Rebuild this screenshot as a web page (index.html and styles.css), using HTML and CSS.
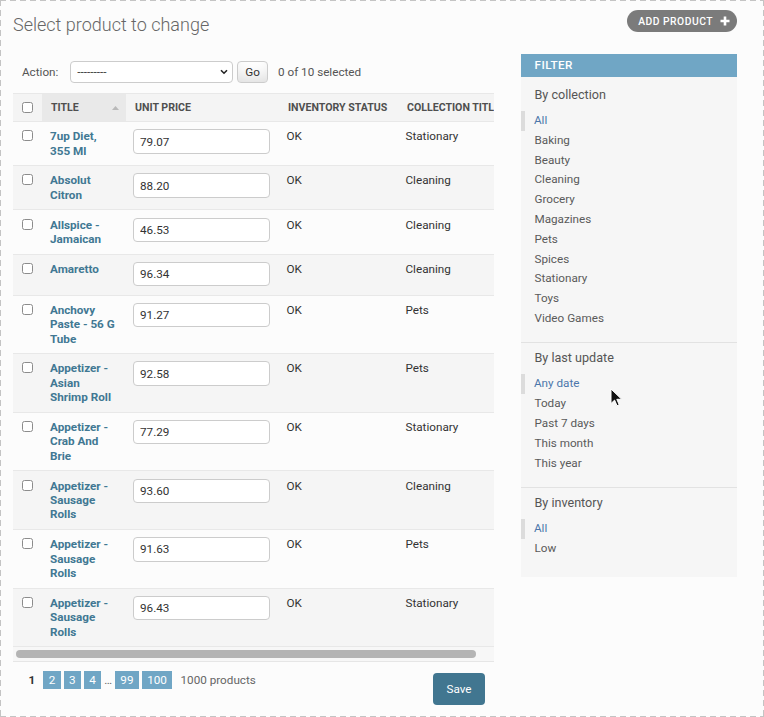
FILE: index.html
```html
<!DOCTYPE html>
<html lang="en">
<head>
<meta charset="utf-8">
<title>Select product to change</title>
<link rel="stylesheet" href="styles.css">
</head>
<body>
<div class="page">
  <header class="top">
    <h1>Select product to change</h1>
    <a class="addlink" href="#">Add product
      <svg class="plus" width="10" height="10" viewBox="0 0 10 10"><path d="M5 0.5v9M0.5 5h9" stroke="#fff" stroke-width="2.6"/></svg>
    </a>
  </header>
  <div class="main">
    <form class="changelist">
      <div class="actions">
        <label class="action-label">Action:</label>
        <span class="select-wrap">
          <select class="action-select"><option>---------</option></select>
          <svg class="chev" width="8" height="6" viewBox="0 0 8 6"><path d="M1 1.2l3 3 3-3" fill="none" stroke="#222" stroke-width="1.6"/></svg>
        </span>
        <button type="button" class="go">Go</button>
        <span class="counter">0 of 10 selected</span>
      </div>
      <div class="results">
        <table>
          <colgroup>
            <col class="c-check"><col class="c-title"><col class="c-price"><col class="c-status"><col class="c-coll">
          </colgroup>
          <thead>
            <tr>
              <th class="th-check"><input type="checkbox" class="cb"></th>
              <th class="sorted"><div class="sort-head"><span>Title</span><svg width="7" height="4" viewBox="0 0 7 4"><path d="M0 4L3.5 0 7 4z" fill="#b9b9b9"/></svg></div></th>
              <th>Unit price</th>
              <th>Inventory status</th>
              <th>Collection title</th>
            </tr>
          </thead>
          <tbody>
            <tr><td class="td-check"><input type="checkbox" class="cb"></td><th class="name"><a href="#">7up Diet, 355 Ml</a></th><td class="price"><input type="text" class="num" value="79.07"></td><td>OK</td><td>Stationary</td></tr>
            <tr><td class="td-check"><input type="checkbox" class="cb"></td><th class="name"><a href="#">Absolut Citron</a></th><td class="price"><input type="text" class="num" value="88.20"></td><td>OK</td><td>Cleaning</td></tr>
            <tr><td class="td-check"><input type="checkbox" class="cb"></td><th class="name"><a href="#">Allspice - Jamaican</a></th><td class="price"><input type="text" class="num" value="46.53"></td><td>OK</td><td>Cleaning</td></tr>
            <tr><td class="td-check"><input type="checkbox" class="cb"></td><th class="name"><a href="#">Amaretto</a></th><td class="price"><input type="text" class="num" value="96.34"></td><td>OK</td><td>Cleaning</td></tr>
            <tr><td class="td-check"><input type="checkbox" class="cb"></td><th class="name"><a href="#">Anchovy Paste - 56 G Tube</a></th><td class="price"><input type="text" class="num" value="91.27"></td><td>OK</td><td>Pets</td></tr>
            <tr><td class="td-check"><input type="checkbox" class="cb"></td><th class="name"><a href="#">Appetizer - Asian Shrimp Roll</a></th><td class="price"><input type="text" class="num" value="92.58"></td><td>OK</td><td>Pets</td></tr>
            <tr><td class="td-check"><input type="checkbox" class="cb"></td><th class="name"><a href="#">Appetizer - Crab And Brie</a></th><td class="price"><input type="text" class="num" value="77.29"></td><td>OK</td><td>Stationary</td></tr>
            <tr><td class="td-check"><input type="checkbox" class="cb"></td><th class="name"><a href="#">Appetizer - Sausage Rolls</a></th><td class="price"><input type="text" class="num" value="93.60"></td><td>OK</td><td>Cleaning</td></tr>
            <tr><td class="td-check"><input type="checkbox" class="cb"></td><th class="name"><a href="#">Appetizer - Sausage Rolls</a></th><td class="price"><input type="text" class="num" value="91.63"></td><td>OK</td><td>Pets</td></tr>
            <tr><td class="td-check"><input type="checkbox" class="cb"></td><th class="name"><a href="#">Appetizer - Sausage Rolls</a></th><td class="price"><input type="text" class="num" value="96.43"></td><td>OK</td><td>Stationary</td></tr>
          </tbody>
        </table>
      </div>
      <div class="hscroll"><div class="hthumb"></div></div>
      <div class="paginator">
        <div class="pages"><span class="this-page">1</span> <a href="#">2</a> <a href="#">3</a> <a href="#">4</a> … <a href="#">99</a> <a href="#" class="end">100</a> 1000 products</div>
        <button type="button" class="save">Save</button>
      </div>
    </form>
    <aside class="filter">
      <h2>Filter</h2>
      <section class="fsec">
        <h3>By collection</h3>
        <ul>
          <li class="selected"><a href="#">All</a></li>
          <li><a href="#">Baking</a></li>
          <li><a href="#">Beauty</a></li>
          <li><a href="#">Cleaning</a></li>
          <li><a href="#">Grocery</a></li>
          <li><a href="#">Magazines</a></li>
          <li><a href="#">Pets</a></li>
          <li><a href="#">Spices</a></li>
          <li><a href="#">Stationary</a></li>
          <li><a href="#">Toys</a></li>
          <li><a href="#">Video Games</a></li>
        </ul>
      </section>
      <section class="fsec">
        <h3>By last update</h3>
        <ul>
          <li class="selected"><a href="#">Any date</a></li>
          <li><a href="#">Today</a></li>
          <li><a href="#">Past 7 days</a></li>
          <li><a href="#">This month</a></li>
          <li><a href="#">This year</a></li>
        </ul>
      </section>
      <section class="fsec last">
        <h3>By inventory</h3>
        <ul>
          <li class="selected"><a href="#">All</a></li>
          <li><a href="#">Low</a></li>
        </ul>
      </section>
    </aside>
  </div>
  <svg class="cursor" width="12" height="19" viewBox="0 0 12 19"><path d="M1 1v14.5l3.6-3.4 2.4 5.6 2.2-1-2.4-5.4h4.9z" fill="#111" stroke="#fff" stroke-width="1"/></svg>
</div>
</body>
</html>
```
FILE: styles.css
```css
body {
  margin: 0;
  font-family: Roboto, "Liberation Sans", Arial, sans-serif;
  font-size: 11.7px;
  color: #333;
}

.page {
  position: relative;
  width: 764px;
  height: 717px;
  box-sizing: border-box;
  padding: 10px 27px 0 13px;
  overflow: hidden;
  background-color: #fcfcfc;
  background-image:
    repeating-linear-gradient(90deg, #c4c4c4 0 6px, transparent 6px 10px),
    repeating-linear-gradient(90deg, #c4c4c4 0 6px, transparent 6px 10px),
    repeating-linear-gradient(180deg, #c4c4c4 0 6px, transparent 6px 10px),
    repeating-linear-gradient(180deg, #c4c4c4 0 6px, transparent 6px 10px);
  background-size: 100% 1px, 100% 1px, 1px 100%, 1px 100%;
  background-position: 0 0, 0 100%, 0 0, 100% 0;
  background-repeat: no-repeat;
}

/* header */
.top {
  display: flex;
  justify-content: space-between;
  align-items: flex-start;
}
.top h1 {
  margin: 3.5px 0 0;
  font-size: 18px;
  font-weight: 300;
  line-height: 22px;
  color: #666;
}
.addlink {
  display: flex;
  align-items: center;
  gap: 7px;
  height: 22px;
  padding: 0 7px 0 11px;
  border-radius: 11px;
  background: #7b7b7b;
  color: #fff;
  font-size: 10.3px;
  font-weight: 500;
  letter-spacing: 0.5px;
  text-transform: uppercase;
  text-decoration: none;
}
.plus { display: block; }

/* layout */
.main {
  display: flex;
  align-items: flex-start;
  gap: 27px;
  margin-top: 18px;
}
.changelist {
  flex: 1;
  min-width: 0;
  margin: 0;
}

/* actions */
.actions {
  display: flex;
  align-items: center;
  height: 21.6px;
  padding: 8px 9px 10px;
  color: #555;
}
.action-label { line-height: 21.6px; }
.select-wrap {
  position: relative;
  display: block;
  margin-left: 12px;
}
.action-select {
  display: block;
  appearance: none;
  -webkit-appearance: none;
  width: 163px;
  height: 22px;
  box-sizing: border-box;
  border: 1px solid #ccc;
  border-radius: 4px;
  background: #fff;
  padding: 0 0 0 6px;
  font-family: inherit;
  font-size: 11.7px;
  color: #333;
}
.chev {
  position: absolute;
  right: 5px;
  top: 8px;
}
.go {
  margin-left: 4px;
  height: 22px;
  box-sizing: border-box;
  padding: 0 7px;
  border: 1px solid #ccc;
  border-radius: 4px;
  background: #fff;
  box-shadow: 0 -13px 18px -9px rgba(0, 0, 0, 0.15) inset;
  font-family: inherit;
  font-size: 11.7px;
  color: #333;
}
.counter { margin-left: 10px; }

/* results table */
.results {
  overflow: hidden;
}
table {
  border-collapse: collapse;
  table-layout: fixed;
  width: 497px;
}
.c-check { width: 29px; }
.c-title { width: 84px; }
.c-price { width: 153px; }
.c-status { width: 119px; }
.c-coll { width: 112px; }

thead th {
  height: 27px;
  padding: 0 7px 0 9px;
  background: #f4f4f4;
  border-top: 1px solid #e8e8e8;
  border-bottom: 1px solid #e8e8e8;
  font-size: 10.6px;
  font-weight: 700;
  color: #4f4f4f;
  text-transform: uppercase;
  text-align: left;
  vertical-align: middle;
  white-space: nowrap;
  overflow: hidden;
}
thead th.sorted { background: #e9e9e9; }
thead th.th-check { padding: 0 0 0 8px; }
.sort-head {
  display: flex;
  align-items: center;
  justify-content: space-between;
}
.sort-head svg { display: block; }

.cb {
  appearance: none;
  -webkit-appearance: none;
  display: block;
  width: 11px;
  height: 11px;
  margin: 0 0 0 1px;
  box-sizing: border-box;
  border: 1px solid #8c8c8c;
  border-radius: 2.5px;
  background: #fff;
}

tbody td, tbody th {
  padding: 7.2px 7px 7.2px 7.5px;
  line-height: 14.4px;
  border-bottom: 1px solid #e8e8e8;
  vertical-align: top;
  text-align: left;
  font-weight: 400;
  color: #333;
}
tbody tr:nth-child(even) td,
tbody tr:nth-child(even) th { background: #f5f5f5; }
tbody td.td-check { padding: 8.2px 0 0 8px; }
tbody th.name { padding: 7.2px 9px 7.2px 8px; }
.name a {
  color: #417893;
  font-weight: 700;
  text-decoration: none;
}
tbody td.price { padding-left: 7px; }
.num {
  display: block;
  width: 137px;
  height: 24.5px;
  box-sizing: border-box;
  margin: 0 0 1px;
  padding: 0 6px;
  border: 1px solid #ccc;
  border-radius: 4px;
  background: #fff;
  font-family: inherit;
  font-size: 11.7px;
  color: #333;
}

/* horizontal scroll bar */
.hscroll {
  height: 14px;
  box-sizing: border-box;
  padding: 3px;
  background: #f7f7f7;
}
.hthumb {
  width: 460px;
  height: 8px;
  border-radius: 4px;
  background: #b4b4b4;
}

/* paginator */
.paginator {
  display: flex;
  justify-content: space-between;
  align-items: flex-start;
  border-top: 1px solid #e6e6e6;
  padding: 9px 9px 9px 10px;
  line-height: 19.8px;
  color: #666;
}
.this-page {
  padding: 1.8px 5.4px;
  font-weight: 700;
  color: #333;
}
.pages a {
  padding: 1.8px 5.4px;
  background: #70a6c5;
  color: #fff;
  text-decoration: none;
}
.pages a.end { margin-right: 5.4px; }
.save {
  margin-top: 2px;
  height: 31.5px;
  padding: 0 13.5px;
  border: none;
  border-radius: 4px;
  background: #417690;
  color: #fff;
  font-family: inherit;
  font-size: 11.7px;
}

/* filter */
.filter {
  flex: none;
  width: 216px;
  background: #f6f6f6;
  padding-bottom: 5px;
}
.filter h2 {
  margin: 0 0 3.5px;
  padding: 4.5px 13.5px;
  line-height: 14px;
  background: #70a6c5;
  color: #fff;
  font-size: 11.7px;
  font-weight: 500;
  letter-spacing: 0.45px;
  text-transform: uppercase;
}
.fsec {
  padding: 7px 0 13.5px;
  border-bottom: 1px solid #e2e2e2;
}
.fsec.last { border-bottom: none; }
.fsec h3 {
  margin: 0;
  padding: 0 13.5px;
  font-size: 12.6px;
  font-weight: 400;
  line-height: 16px;
  color: #555;
}
.fsec ul {
  margin: 8.1px 0 0;
  padding: 0 13.5px;
  list-style: none;
}
.fsec li {
  line-height: 19.8px;
}
.fsec li a {
  display: block;
  color: #5a5a5a;
  text-decoration: none;
}
.fsec li.selected {
  border-left: 4.5px solid #dcdcdc;
  padding-left: 9px;
  margin-left: -13.5px;
}
.fsec li.selected a { color: #4c76ab; }

.cursor {
  position: absolute;
  left: 610px;
  top: 388px;
}
```
